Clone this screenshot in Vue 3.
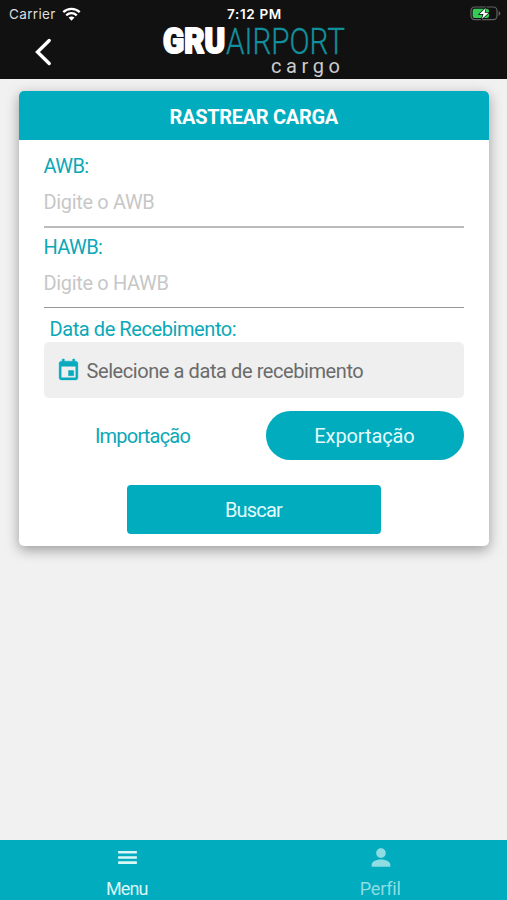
<script setup>
import { ref } from 'vue'

const fields = [
  { id: 'awb', label: 'AWB:', placeholder: 'Digite o AWB' },
  { id: 'hawb', label: 'HAWB:', placeholder: 'Digite o HAWB' },
]
const mode = ref('export')
</script>

<template>
  <div class="screen">
    <header class="top">
      <div class="status">
        <div class="carrier">
          <span>Carrier</span>
          <svg class="wifi" viewBox="0 0 18 13" width="19" height="14">
            <path d="M1.200 4.700C5.500.6 12.500.6 16.800 4.700" />
            <path d="M4 7.700c2.900-2.600 7.100-2.600 10 0" />
            <path class="solid" d="M9 12.900 6.200 9.900c1.600-1.400 4-1.400 5.600 0z" />
          </svg>
        </div>
        <span class="time">7:12 PM</span>
        <svg class="battery" viewBox="0 0 31 15" width="31" height="15">
          <rect x="1" y="1" width="26" height="12.600" rx="3.600" fill="none" stroke="#626262" stroke-width="1.200" />
          <path d="M28.600 5v4.800q1.800-.8 1.800-2.400T28.600 5z" fill="#626262" />
          <rect x="2.700" y="2.700" width="16.300" height="9.200" rx="2" fill="#35cc56" />
          <path d="M15.800 1.900 9.500 8h4l-1.700 5 7-6.300h-4.200z" fill="#fff" stroke="#111" stroke-width="1.400" paint-order="stroke" />
        </svg>
      </div>
      <div class="nav">
        <button class="back" aria-label="Voltar">
          <svg viewBox="0 0 18 28" width="18" height="28"><path d="M14.200 2.500 2.500 14l11.700 11.500" /></svg>
        </button>
        <svg class="logo" viewBox="0 0 190 54" width="190" height="54">
          <text class="gru" x="5" y="25.800" textLength="62" lengthAdjust="spacingAndGlyphs">GRU</text>
          <text class="airport" x="68" y="26.500" textLength="119" lengthAdjust="spacingAndGlyphs">AIRPORT</text>
          <text class="cargo" x="113" y="46" textLength="69" lengthAdjust="spacing">cargo</text>
        </svg>
      </div>
    </header>

    <main class="content">
      <section class="card">
        <h1>RASTREAR CARGA</h1>
        <div class="form">
          <div v-for="f in fields" :key="f.id" class="field">
            <label :for="f.id">{{ f.label }}</label>
            <input :id="f.id" :placeholder="f.placeholder" />
          </div>
          <div class="date-label">Data de Recebimento:</div>
          <div class="date">
            <svg viewBox="0 0 24 24" width="25" height="25">
              <path fill="#08abbd" stroke="#08abbd" stroke-width=".4" d="M17 12h-5v5h5v-5zM16 1v2H8V1H6v2H5c-1.110 0-1.990.9-1.990 2L3 19a2 2 0 0 0 2 2h14c1.100 0 2-.9 2-2V5c0-1.100-.9-2-2-2h-1V1h-2zm3 18H5V8h14v11z" />
            </svg>
            <span>Selecione a data de recebimento</span>
          </div>
          <div class="modes">
            <button class="imp" :class="{ active: mode === 'import' }" @click="mode = 'import'">Importação</button>
            <button class="exp" :class="{ active: mode === 'export' }" @click="mode = 'export'">Exportação</button>
          </div>
          <button class="search">Buscar</button>
        </div>
      </section>
    </main>

    <footer class="tabs">
      <div class="tab">
        <svg viewBox="0 0 24 24" width="25" height="25"><path d="M3 18.200h18v-2.500H3zm0-5h18v-2.500H3zm0-5h18V5.700H3z" /></svg>
        <span class="menu">Menu</span>
      </div>
      <div class="tab dim">
        <svg viewBox="0 0 24 24" width="28" height="28"><path d="M12 12.300c2.300 0 4.100-1.800 4.100-4.100S14.300 4.100 12 4.100 7.900 5.900 7.900 8.200s1.800 4.100 4.100 4.100zm0 1.500c-3.300 0-8 1.500-8 4.600V20h16v-1.600c0-3.100-4.700-4.600-8-4.600z" /></svg>
        <span>Perfil</span>
      </div>
    </footer>
  </div>
</template>

<style>
body { background: #f1f1f1; }
</style>

<style scoped>
* { box-sizing: border-box; }
.screen {
  height: 900px;
  display: flex;
  flex-direction: column;
  overflow: hidden;
  background: #f1f1f1;
  font-family: Roboto, "Noto Sans", sans-serif;
  font-size: 20px;
  letter-spacing: -.42px;
}
button { border: 0; padding: 0; background: none; font: inherit; letter-spacing: inherit; }
.top { height: 79px; flex: none; background: #111; color: #fff; letter-spacing: 0; }
.status {
  height: 27px;
  display: grid;
  grid-template-columns: 1fr auto 1fr;
  align-items: center;
  padding: 0 6px 0 9px;
  font-family: Inter, sans-serif;
}
.carrier { display: flex; align-items: center; gap: 6px; color: #ddd; font-size: 13.500px; letter-spacing: .35px; }
.wifi path { fill: none; stroke: #fff; stroke-width: 2.200; }
.wifi .solid { fill: #fff; stroke: none; }
.time { font-size: 13.500px; font-weight: 600; letter-spacing: .65px; margin-right: 1px; }
.battery { justify-self: end; }
.nav { height: 52px; display: flex; }
.back { width: 158px; padding: 11px 0 0 35px; display: flex; }
.back path { fill: none; stroke: #fff; stroke-width: 3.400; stroke-linecap: round; }
.logo { overflow: visible; }
.gru { font: 900 34.500px Roboto, sans-serif; fill: #fff; stroke: #fff; stroke-width: 2.100; stroke-linejoin: round; }
.airport { font: 300 36px Roboto, sans-serif; fill: #128f9d; stroke: #128f9d; stroke-width: .3; }
.cargo { font: 400 20px Roboto, sans-serif; fill: #ccc; }
.content { flex: 1; padding: 12px 18.500px 0 19px; }
.card {
  height: 455px;
  border-radius: 5px;
  background: #fff;
  box-shadow: 0 4px 13px rgba(0, 0, 0, .36);
}
h1 {
  margin: 0;
  height: 49px;
  padding-top: 2px;
  display: flex;
  align-items: center;
  justify-content: center;
  border-radius: 5px 5px 0 0;
  background: #00acbe;
  color: #fff;
  font-size: 20px;
  font-weight: 700;
  letter-spacing: -.3px;
}
.form { padding: 12px 25px 0 24.500px; display: flex; flex-direction: column; }
.field { height: 81px; display: flex; flex-direction: column; }
label, .date-label { height: 28px; line-height: 28px; color: #0aa8b8; }
.field label { letter-spacing: -.6px; }
.field input {
  width: 100%;
  height: 48px;
  padding: 0 0 2px;
  border: 0;
  border-bottom: 2px solid #b9bbbd;
  outline: 0;
  background: none;
  font: inherit;
  letter-spacing: -.35px;
}
.field + .field input { border-bottom: 1px solid #94989b; height: 47px; padding-bottom: 3px; }
.field input::placeholder { color: #c7c7c7; opacity: 1; }
.date-label { padding-left: 6px; margin-top: 1px; }
.date {
  height: 56px;
  margin-top: -1px;
  padding-left: 12px;
  display: flex;
  align-items: center;
  gap: 6px;
  border-radius: 5px;
  background: #efefef;
  color: #6b6b6b;
}
.date span { padding-top: 1px; }
.modes { display: flex; justify-content: space-between; margin-top: 13.400px; }
.modes button { width: 198px; height: 49px; border-radius: 25px; color: #0aa8b8; }
.modes .imp { letter-spacing: -.8px; }
.modes .exp { letter-spacing: -.1px; }
.modes .active { background: #00acbe; color: #e3fbfd; }
.search {
  align-self: center;
  width: 254px;
  height: 49px;
  margin-top: 24.600px;
  padding-top: 1px;
  border-radius: 4px;
  background: #00acbe;
  color: #e3fbfd;
  letter-spacing: -.8px;
}
.tabs { height: 60px; flex: none; display: flex; background: #00acbe; }
.tab {
  flex: 1;
  display: flex;
  flex-direction: column;
  align-items: center;
  color: #d9f6f8;
  font-size: 18px;
  letter-spacing: -.15px;
}
.tab svg { flex: none; height: 35px; fill: currentColor; margin-left: 1px; }
.tab span { flex: none; line-height: 27px; }
.tab .menu { letter-spacing: -.9px; }
.dim { color: #8fdce3; }
</style>
